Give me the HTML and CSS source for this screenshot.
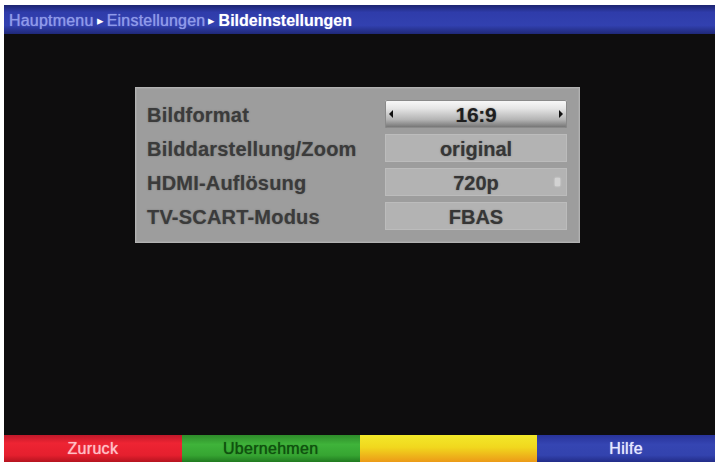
FILE: index.html
```html
<!DOCTYPE html>
<html lang="de">
<head>
<meta charset="utf-8">
<title>Bildeinstellungen</title>
<link rel="stylesheet" href="styles.css">
</head>
<body>
<div class="screen">
  <div class="titlebar">
    <span class="crumb">Hauptmenu</span><span class="sep">&#9656;</span><span class="crumb">Einstellungen</span><span class="sep">&#9656;</span><span class="crumb current">Bildeinstellungen</span>
  </div>
  <div class="main">
    <div class="panel">
      <div class="row">
        <div class="label">Bildformat</div>
        <div class="value selected"><span class="arrow left"></span><span class="vtext big">16:9</span><span class="arrow right"></span></div>
      </div>
      <div class="row">
        <div class="label">Bilddarstellung/Zoom</div>
        <div class="value"><span class="vtext">original</span></div>
      </div>
      <div class="row">
        <div class="label">HDMI-Auflösung</div>
        <div class="value"><span class="vtext">720p</span><span class="scroll"></span></div>
      </div>
      <div class="row">
        <div class="label">TV-SCART-Modus</div>
        <div class="value"><span class="vtext">FBAS</span></div>
      </div>
    </div>
  </div>
  <div class="footer">
    <div class="key red">Zuruck</div>
    <div class="key green">Ubernehmen</div>
    <div class="key yellow"></div>
    <div class="key blue">Hilfe</div>
  </div>
</div>
</body>
</html>
```
FILE: styles.css
```css
html, body {
  margin: 0;
  padding: 0;
  background: #ffffff;
}
body {
  width: 718px;
  height: 462px;
  overflow: hidden;
  font-family: "Liberation Sans", Arial, sans-serif;
}
.screen {
  margin: 5px 3px 0 4px;
  height: 457px;
  background: #0e0d0e;
  display: flex;
  flex-direction: column;
}
.titlebar {
  height: 29px;
  background: linear-gradient(#1c2470 0%, #2f3caa 25%, #3241b0 70%, #1f2878 100%);
  display: flex;
  align-items: center;
  padding: 2px 0 0 5px;
  box-sizing: border-box;
  font-size: 16px;
  letter-spacing: 0.2px;
  color: #8f9aea;
  white-space: nowrap;
}
.crumb {
  text-shadow: 0 0 1px rgba(200, 210, 255, 0.6);
}
.crumb.current {
  color: #ffffff;
  font-weight: bold;
  letter-spacing: 0;
}
.sep {
  color: #ffffff;
  font-size: 13px;
  margin: 0 3px;
}
.main {
  flex: 1;
  padding: 53px 0 0 131px;
}
.panel {
  width: 420px;
  padding: 13px 13px 13px 12px;
  background: #9d9d9d;
  box-shadow: inset 0 0 0 1px #b2b2b2, inset 0 0 0 2px #a4a4a4;
  display: flex;
  flex-direction: column;
  gap: 6px;
}
.row {
  display: flex;
  align-items: center;
  height: 28px;
}
.label {
  width: 238px;
  padding-top: 2px;
  font-size: 20px;
  font-weight: bold;
  letter-spacing: 0.2px;
  color: #3b3b3b;
  text-shadow: 0 0 1.5px rgba(70, 70, 70, 0.6);
  white-space: nowrap;
}
.value {
  position: relative;
  width: 182px;
  height: 28px;
  background: #b3b3b3;
  box-shadow: inset 0 0 0 1px #bcbcbc;
  display: flex;
  align-items: center;
  justify-content: center;
}
.value.selected {
  background: linear-gradient(#fafafa 0%, #e6e6e6 30%, #b4b4b4 70%, #6e6e6e 100%);
  border-radius: 2px;
  box-shadow: inset 0 0 0 1px #8a8a8a;
}
.vtext {
  padding-top: 2px;
  font-size: 20px;
  font-weight: bold;
  color: #363636;
  text-shadow: 0 0 1.5px rgba(70, 70, 70, 0.6);
}
.vtext.big {
  font-size: 21px;
  color: #1e1e1e;
  letter-spacing: -0.3px;
}
.arrow {
  position: absolute;
  top: 10px;
  width: 0;
  height: 0;
  border-top: 4px solid transparent;
  border-bottom: 4px solid transparent;
}
.arrow.left {
  left: 4px;
  border-right: 4px solid #111;
}
.arrow.right {
  right: 4px;
  border-left: 4px solid #111;
}
.scroll {
  position: absolute;
  right: 7px;
  top: 10px;
  width: 5px;
  height: 8px;
  background: #d2d2d2;
  box-shadow: 0 0 2px #eeeeee;
}
.footer {
  height: 27px;
  display: flex;
}
.key {
  flex: 1;
  display: flex;
  align-items: center;
  justify-content: center;
  font-size: 16px;
  letter-spacing: 0.3px;
  text-shadow: 0 0 1px currentColor;
}
.key.red {
  background: linear-gradient(#c0182a 0%, #ee2433 30%, #e51f2e 75%, #b5141f 100%);
  color: #ffc0c6;
}
.key.green {
  background: linear-gradient(#2e8c2a 0%, #3fb33a 35%, #36a532 75%, #217a20 100%);
  color: #10500f;
}
.key.yellow {
  background: linear-gradient(#f2e82a 0%, #f1d81e 45%, #ec9a18 100%);
}
.key.blue {
  background: linear-gradient(#28339a 0%, #3545b2 35%, #3343ae 75%, #222c88 100%);
  color: #e6e8ff;
}
```
